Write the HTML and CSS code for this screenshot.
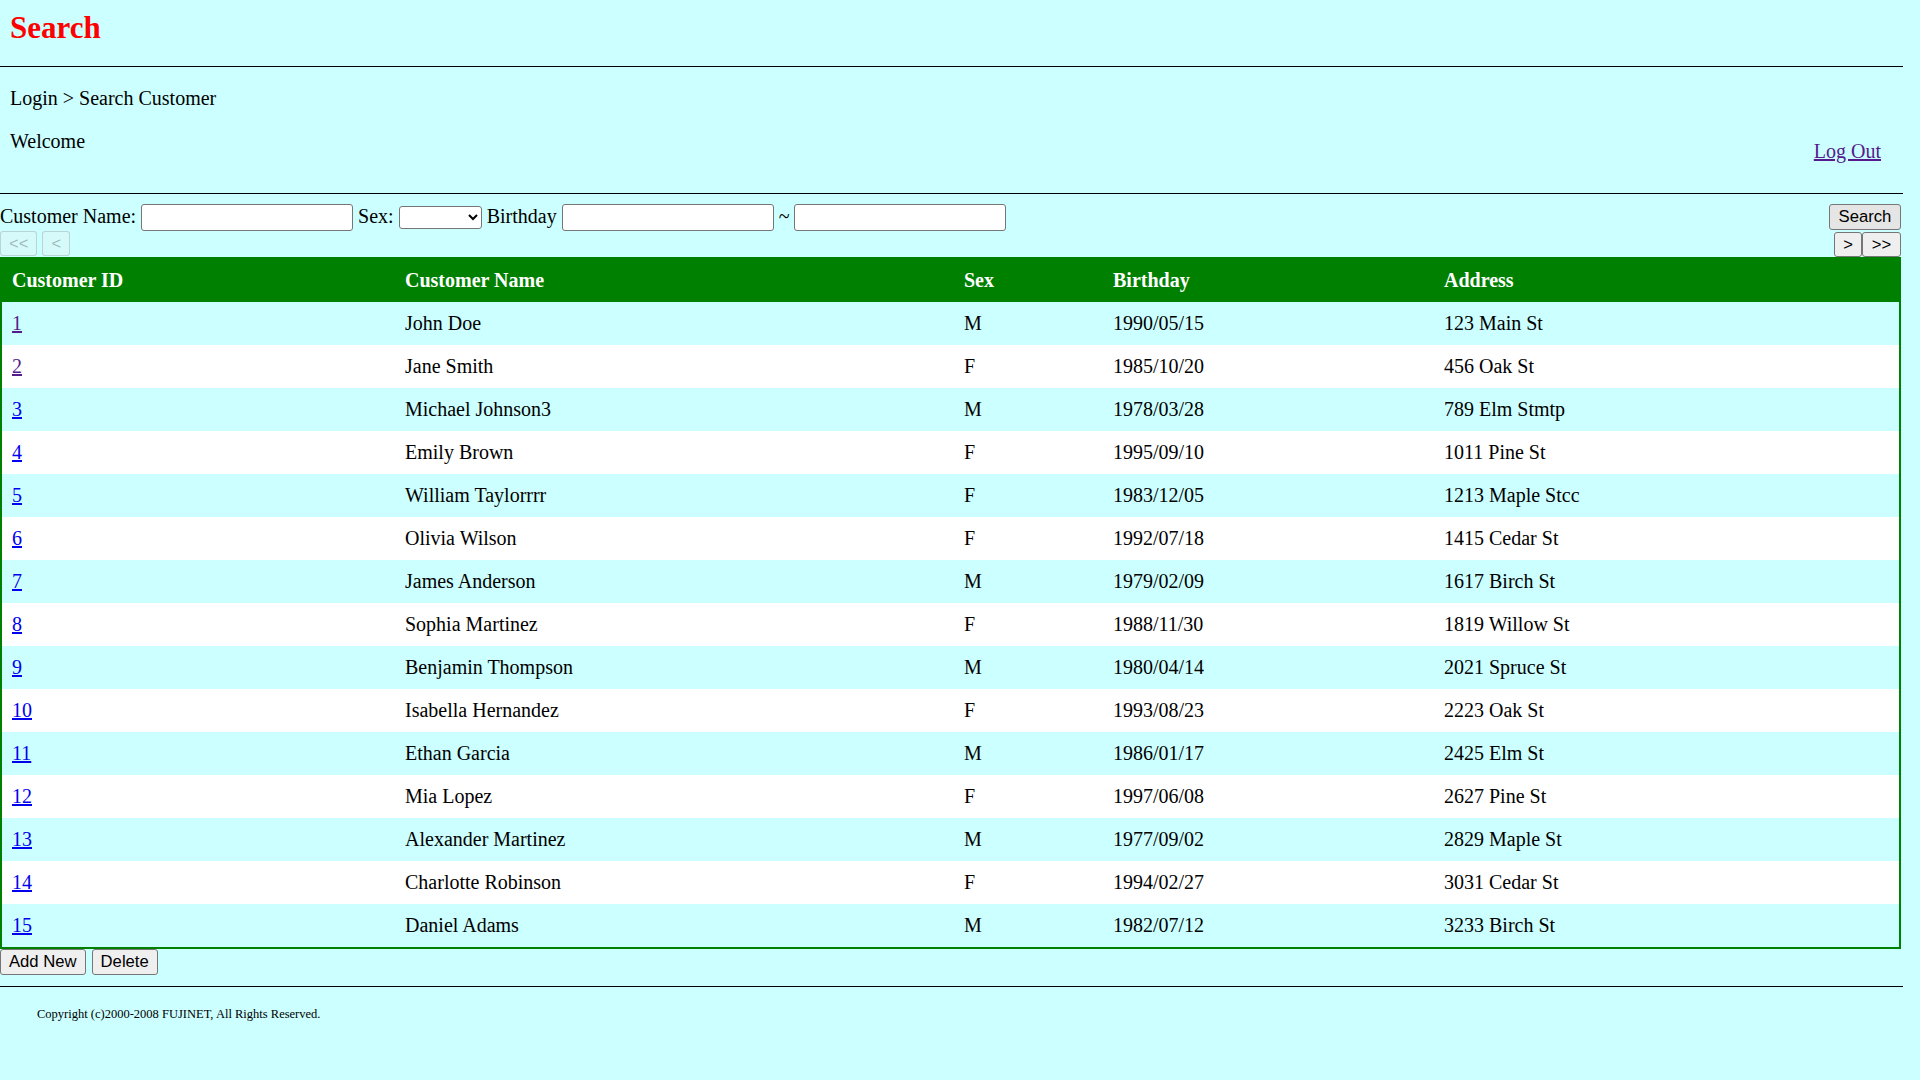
FILE: index.html
```html
<!DOCTYPE html>
<html lang="en">
<head>
<meta charset="utf-8">
<title>Search</title>
<link rel="stylesheet" href="styles.css">
</head>
<body>
<div class="page">
  <h2 class="title">Search</h2>
  <hr class="rule">
  <div class="info">
    <div class="info-left">
      <p>Login &gt; Search Customer</p>
      <p>Welcome</p>
    </div>
    <a class="logout" href="#">Log Out</a>
  </div>
  <hr class="rule rule-2">
  <form class="search-row">
    <div class="fields">Customer Name: <input class="field" type="text"> Sex: <select class="select"><option></option><option>M</option><option>F</option></select> Birthday <input class="field" type="text"> ~ <input class="field" type="text"></div>
    <button class="btn btn-search" type="button">Search</button>
  </form>
  <div class="pager">
    <div class="pager-left">
      <button class="btn pager-btn" type="button" disabled>&lt;&lt;</button>
      <button class="btn pager-btn" type="button" disabled>&lt;</button>
    </div>
    <div class="pager-right"><button class="btn pager-btn" type="button">&gt;</button><button class="btn pager-btn pager-wide" type="button">&gt;&gt;</button></div>
  </div>
  <table class="data">
    <thead>
      <tr>
        <th class="w-id">Customer ID</th>
        <th class="w-name">Customer Name</th>
        <th class="w-sex">Sex</th>
        <th class="w-birth">Birthday</th>
        <th class="w-addr">Address</th>
      </tr>
    </thead>
    <tbody>
      <tr><td><a class="visited" href="#">1</a></td><td>John Doe</td><td>M</td><td>1990/05/15</td><td>123 Main St</td></tr>
      <tr><td><a class="visited" href="#">2</a></td><td>Jane Smith</td><td>F</td><td>1985/10/20</td><td>456 Oak St</td></tr>
      <tr><td><a href="#">3</a></td><td>Michael Johnson3</td><td>M</td><td>1978/03/28</td><td>789 Elm Stmtp</td></tr>
      <tr><td><a href="#">4</a></td><td>Emily Brown</td><td>F</td><td>1995/09/10</td><td>1011 Pine St</td></tr>
      <tr><td><a href="#">5</a></td><td>William Taylorrrr</td><td>F</td><td>1983/12/05</td><td>1213 Maple Stcc</td></tr>
      <tr><td><a href="#">6</a></td><td>Olivia Wilson</td><td>F</td><td>1992/07/18</td><td>1415 Cedar St</td></tr>
      <tr><td><a href="#">7</a></td><td>James Anderson</td><td>M</td><td>1979/02/09</td><td>1617 Birch St</td></tr>
      <tr><td><a href="#">8</a></td><td>Sophia Martinez</td><td>F</td><td>1988/11/30</td><td>1819 Willow St</td></tr>
      <tr><td><a href="#">9</a></td><td>Benjamin Thompson</td><td>M</td><td>1980/04/14</td><td>2021 Spruce St</td></tr>
      <tr><td><a href="#">10</a></td><td>Isabella Hernandez</td><td>F</td><td>1993/08/23</td><td>2223 Oak St</td></tr>
      <tr><td><a href="#">11</a></td><td>Ethan Garcia</td><td>M</td><td>1986/01/17</td><td>2425 Elm St</td></tr>
      <tr><td><a href="#">12</a></td><td>Mia Lopez</td><td>F</td><td>1997/06/08</td><td>2627 Pine St</td></tr>
      <tr><td><a href="#">13</a></td><td>Alexander Martinez</td><td>M</td><td>1977/09/02</td><td>2829 Maple St</td></tr>
      <tr><td><a href="#">14</a></td><td>Charlotte Robinson</td><td>F</td><td>1994/02/27</td><td>3031 Cedar St</td></tr>
      <tr><td><a href="#">15</a></td><td>Daniel Adams</td><td>M</td><td>1982/07/12</td><td>3233 Birch St</td></tr>
    </tbody>
  </table>
  <div class="actions">
    <button class="btn" type="button">Add New</button>
    <button class="btn" type="button">Delete</button>
  </div>
  <hr class="rule rule-3">
  <p class="copyright">Copyright (c)2000-2008 FUJINET, All Rights Reserved.</p>
</div>
</body>
</html>
```

FILE: styles.css
```css
html, body {
  margin: 0;
  background: #ccffff;
}

body {
  font-family: "Liberation Serif", "Times New Roman", serif;
  font-size: 20px;
  line-height: 23px;
  color: #000;
}

.page {
  width: 1903px;
}

.title {
  margin: 0;
  padding: 10px 10px 21px;
  font-size: 31px;
  line-height: 35px;
  font-weight: bold;
  color: #ff0000;
}

.rule {
  margin: 0;
  height: 0;
  border: 0;
  border-top: 1px solid #000;
}

.rule-2 {
  margin-top: 20px;
}

.rule-3 {
  margin-top: 11px;
}

.info {
  display: flex;
  justify-content: space-between;
  align-items: flex-end;
  padding: 0 22px 0 10px;
}

.info-left p {
  margin: 20px 0;
}

.logout {
  margin-bottom: 10px;
  color: #551a8b;
}

a {
  color: #0000ee;
}

a.visited {
  color: #551a8b;
}

.search-row {
  display: flex;
  justify-content: space-between;
  align-items: flex-start;
  margin: 10px 0 0;
  padding-right: 2px;
}

.fields {
  white-space: nowrap;
}

.field {
  box-sizing: border-box;
  width: 212px;
  height: 27px;
  margin: 0;
  padding: 1px 3px;
  border: 1px solid #767676;
  border-radius: 3px;
  background: #fff;
  font-family: "Liberation Sans", Arial, sans-serif;
  font-size: 16.67px;
}

.select {
  box-sizing: border-box;
  width: 83px;
  height: 23px;
  margin: 0;
  font-family: "Liberation Sans", Arial, sans-serif;
  font-size: 16.67px;
  border: 1px solid #767676;
  border-radius: 3px;
  background-color: #fff;
}

.btn {
  box-sizing: border-box;
  height: 26px;
  margin: 0;
  padding: 0 8px;
  border: 1px solid #767676;
  border-radius: 3px;
  background: #efefef;
  color: #000;
  font-family: "Liberation Sans", Arial, sans-serif;
  font-size: 16.67px;
  line-height: 20px;
}

.btn-search {
  background: #e5e5e5;
  width: 72px;
}

.btn:disabled {
  background: rgba(239, 239, 239, 0.3);
  border-color: rgba(118, 118, 118, 0.3);
  color: rgba(16, 16, 16, 0.3);
}

.pager {
  display: flex;
  justify-content: space-between;
  height: 26px;
  padding-right: 2px;
}

.pager-left {
  display: flex;
  gap: 5px;
  align-self: flex-start;
}

.pager-right {
  display: flex;
  align-self: flex-end;
}

.pager-btn {
  height: 25px;
  min-width: 28px;
}

.pager-wide {
  width: 39px;
}

.data {
  width: 1901px;
  border: 2px solid #008000;
  border-spacing: 0;
  table-layout: fixed;
}

.data th,
.data td {
  box-sizing: border-box;
  padding: 10px;
  text-align: left;
  line-height: 23px;
}

.data th {
  background: #008000;
  color: #fff;
  font-weight: bold;
}

.w-id { width: 393px; }
.w-name { width: 559px; }
.w-sex { width: 149px; }
.w-birth { width: 331px; }
.w-addr { width: 465px; }

.data tbody tr:nth-child(odd) td {
  background: #ccffff;
}

.data tbody tr:nth-child(even) td {
  background: #fff;
}

.actions {
  display: flex;
  gap: 6px;
}

.copyright {
  margin: 0;
  padding: 20px 0 0 37px;
  font-size: 12.5px;
  line-height: 15px;
}
```
